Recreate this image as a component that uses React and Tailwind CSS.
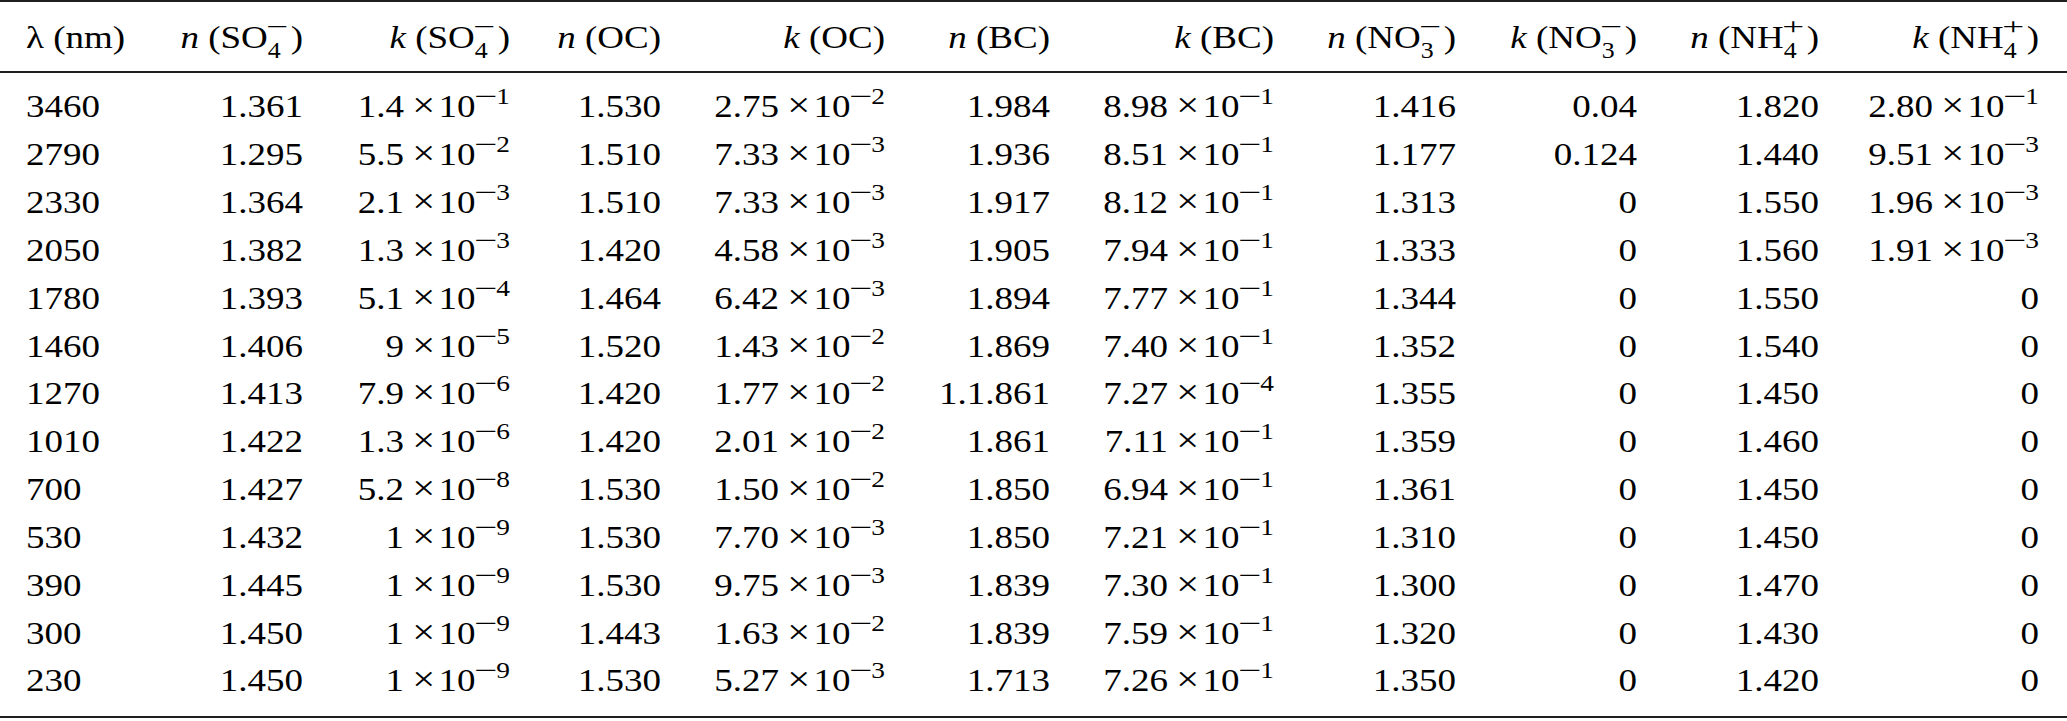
import React from 'react';

// Optical constants table (n, k per species and wavelength)

const ROW = 'grid grid-cols-[134px_143px_207px_151px_224px_165px_224px_182px_181px_182px_220px] pl-[26px] h-[47.83px] leading-[47.83px] scale-y-[0.86] whitespace-nowrap';

const rows = [
  ['3460', '1.361', ['1.4', '1'], '1.530', ['2.75', '2'], '1.984', ['8.98', '1'], '1.416', '0.04', '1.820', ['2.80', '1']],
  ['2790', '1.295', ['5.5', '2'], '1.510', ['7.33', '3'], '1.936', ['8.51', '1'], '1.177', '0.124', '1.440', ['9.51', '3']],
  ['2330', '1.364', ['2.1', '3'], '1.510', ['7.33', '3'], '1.917', ['8.12', '1'], '1.313', '0', '1.550', ['1.96', '3']],
  ['2050', '1.382', ['1.3', '3'], '1.420', ['4.58', '3'], '1.905', ['7.94', '1'], '1.333', '0', '1.560', ['1.91', '3']],
  ['1780', '1.393', ['5.1', '4'], '1.464', ['6.42', '3'], '1.894', ['7.77', '1'], '1.344', '0', '1.550', '0'],
  ['1460', '1.406', ['9', '5'], '1.520', ['1.43', '2'], '1.869', ['7.40', '1'], '1.352', '0', '1.540', '0'],
  ['1270', '1.413', ['7.9', '6'], '1.420', ['1.77', '2'], '1.1.861', ['7.27', '4'], '1.355', '0', '1.450', '0'],
  ['1010', '1.422', ['1.3', '6'], '1.420', ['2.01', '2'], '1.861', ['7.11', '1'], '1.359', '0', '1.460', '0'],
  ['700', '1.427', ['5.2', '8'], '1.530', ['1.50', '2'], '1.850', ['6.94', '1'], '1.361', '0', '1.450', '0'],
  ['530', '1.432', ['1', '9'], '1.530', ['7.70', '3'], '1.850', ['7.21', '1'], '1.310', '0', '1.450', '0'],
  ['390', '1.445', ['1', '9'], '1.530', ['9.75', '3'], '1.839', ['7.30', '1'], '1.300', '0', '1.470', '0'],
  ['300', '1.450', ['1', '9'], '1.443', ['1.63', '2'], '1.839', ['7.59', '1'], '1.320', '0', '1.430', '0'],
  ['230', '1.450', ['1', '9'], '1.530', ['5.27', '3'], '1.713', ['7.26', '1'], '1.350', '0', '1.420', '0'],
];

const Sign = ({ children }) => (
  <span className="inline-block mx-[0.1em] scale-x-[1.5]">{children}</span>
);

const Sci = ({ m, e }) => (
  <>
    {m}
    <span className="ml-[0.2em] mr-[0.08em] text-[1.1em] leading-none">×</span>
    10
    <sup className="text-[0.74em] -top-[0.6em]">
      <Sign>−</Sign>
      {e}
    </sup>
  </>
);

const Ion = ({ base, sub, sup }) => (
  <>
    {base}
    <span className="inline-flex flex-col items-start align-[0.66em] -my-[0.3em] mr-[0.12em] text-[0.7em] leading-[1.07]">
      <Sign>{sup}</Sign>
      <span>{sub}</span>
    </span>
  </>
);

const Label = ({ v, name }) => (
  <>
    <span className="italic">{v}</span> ({name})
  </>
);

const headers = [
  <>λ (nm)</>,
  <Label v="n" name={<Ion base="SO" sub="4" sup="−" />} />,
  <Label v="k" name={<Ion base="SO" sub="4" sup="−" />} />,
  <Label v="n" name="OC" />,
  <Label v="k" name="OC" />,
  <Label v="n" name="BC" />,
  <Label v="k" name="BC" />,
  <Label v="n" name={<Ion base="NO" sub="3" sup="−" />} />,
  <Label v="k" name={<Ion base="NO" sub="3" sup="−" />} />,
  <Label v="n" name={<Ion base="NH" sub="4" sup="+" />} />,
  <Label v="k" name={<Ion base="NH" sub="4" sup="+" />} />,
];

const Rule = () => <div className="h-[2px] bg-[#1f1f1f]" />;

export default function App() {
  return (
    <div className="w-[2067px] h-[721px] bg-white text-black text-[37px] font-['Liberation_Serif','Times_New_Roman',serif]">
      <Rule />
      <div className="pt-[11.8px] pb-[9.4px]">
        <div className={ROW}>
          {headers.map((h, i) => (
            <div key={i} className={i === 0 ? 'text-left' : 'text-right'}>
              {h}
            </div>
          ))}
        </div>
      </div>
      <Rule />
      <div className="pt-[10.4px] pb-[10.8px]">
        {rows.map((r, ri) => (
          <div key={ri} className={ROW}>
            {r.map((c, ci) => (
              <div key={ci} className={ci === 0 ? 'text-left' : 'text-right'}>
                {Array.isArray(c) ? <Sci m={c[0]} e={c[1]} /> : c}
              </div>
            ))}
          </div>
        ))}
      </div>
      <Rule />
    </div>
  );
}
